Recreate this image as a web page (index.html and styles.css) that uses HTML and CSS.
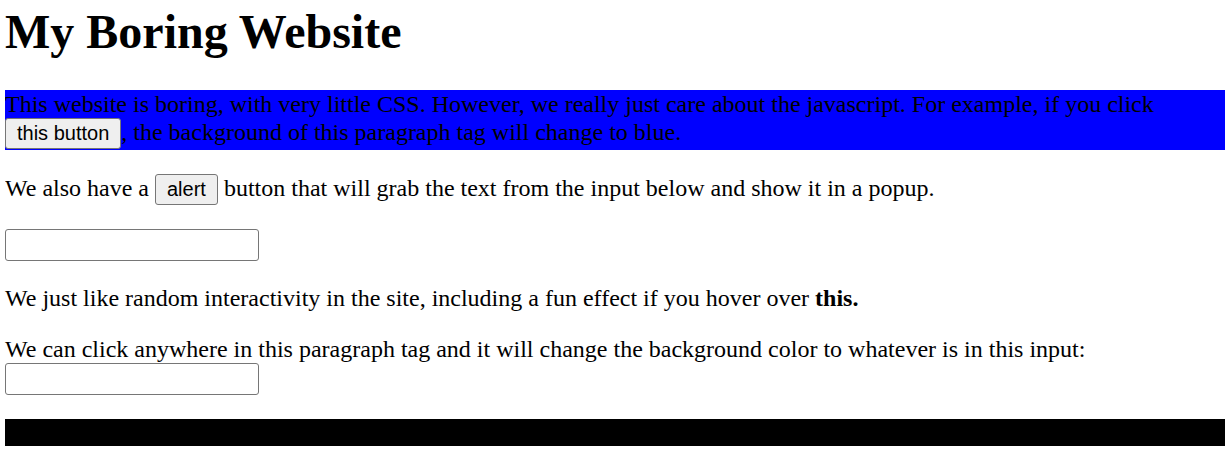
FILE: index.html
```html
<!DOCTYPE html>
<html>
<head>
<meta charset="utf-8">
<title>My Boring Website</title>
<link rel="stylesheet" href="styles.css">
</head>
<body>
<h1 class="title">My Boring Website</h1>
<p class="para blue">This website is boring, with very little CSS. However, we really just care about the javascript. For example, if you click <button class="btn">this button</button>, the background of this paragraph tag will change to blue.</p>
<p class="para">We also have a <button class="btn">alert</button> button that will grab the text from the input below and show it in a popup.</p>
<p class="para"><input class="field" type="text"></p>
<p class="para">We just like random interactivity in the site, including a fun effect if you hover over <b>this.</b></p>
<p class="para">We can click anywhere in this paragraph tag and it will change the background color to whatever is in this input: <input class="field" type="text"></p>
<p class="para bar">&nbsp;</p>
</body>
</html>
```

FILE: styles.css
```css
html {
  overflow: hidden;
}
body {
  margin: 4px 0 0 5px;
  width: 1240px;
  font-family: "Liberation Serif", "Times New Roman", serif;
  font-size: 24px;
  color: #000;
  background: #fff;
}
.title {
  font-size: 48px;
  font-weight: bold;
  margin: 0 0 31px 0;
}
.para {
  margin: 24px 0;
}
.blue {
  background: #0000ff;
  padding-top: 1px;
  padding-bottom: 1px;
}
.bar {
  background: #000;
  color: #000;
}
.btn {
  font-family: "Liberation Sans", Arial, sans-serif;
  font-size: 20px;
  color: #000;
  background: #efefef;
  border: 1px solid #767676;
  border-radius: 3px;
  padding: 3px 11px;
  margin: 0;
}
.field {
  box-sizing: border-box;
  width: 254px;
  height: 32px;
  margin: 0;
  padding: 2px 3px;
  border: 1px solid #767676;
  border-radius: 3px;
  background: #fff;
  font-family: "Liberation Sans", Arial, sans-serif;
  font-size: 20px;
  vertical-align: baseline;
}
```
